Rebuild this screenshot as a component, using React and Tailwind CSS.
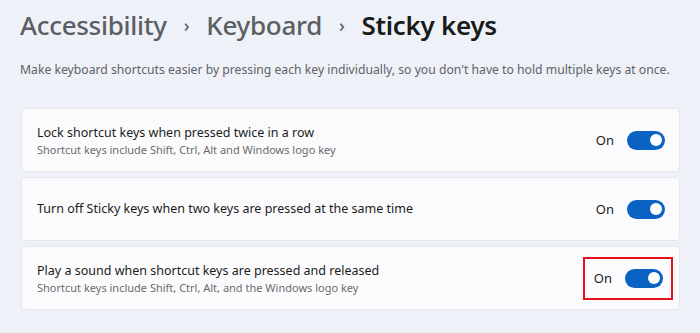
import React from "react";

function Toggle() {
  return (
    <div className="w-[38px] h-[19px] rounded-full bg-[#0a62c2] flex items-center justify-end pr-[3px]">
      <div className="w-[12px] h-[12px] rounded-full bg-white" />
    </div>
  );
}

function Row({ title, sub, highlight }) {
  return (
    <div className="h-[64px] rounded-[4px] bg-[#fbfbfd] border border-[#e6e8ec] flex items-center pl-[15px] pr-[14px]">
      <div className="flex-1 flex flex-col">
        <div className="text-[12.5px] leading-[18px] text-[#1b1b1b]">{title}</div>
        {sub && <div className="text-[11px] leading-[15px] text-[#6b6b6b]">{sub}</div>}
      </div>
      <div className={highlight ? "flex items-center gap-[13px] border-2 border-[#e8101e] pl-[9px] pr-[8px] h-[43px] mr-[-8px]" : "flex items-center gap-[13px]"}>
        <span className="text-[13px] text-[#1b1b1b]">On</span>
        <Toggle />
      </div>
    </div>
  );
}

export default function App() {
  return (
    <div className="w-[700px] h-[333px] bg-[#eef2f8] px-[20px] pt-[5px]" style={{ fontFamily: '"Noto Sans", sans-serif' }}>
      <div className="flex items-center h-[40px] text-[26px] tracking-[-0.3px] font-medium">
        <span className="text-[#5b5e63]">Accessibility</span>
        <span className="text-[#5b5e63] text-[18px] mx-[17px]">›</span>
        <span className="text-[#5b5e63]">Keyboard</span>
        <span className="text-[#5b5e63] text-[18px] mx-[17px]">›</span>
        <span className="text-[#1a1a1a] font-semibold">Sticky keys</span>
      </div>
      <div className="mt-[16px] text-[12.2px] text-[#5f6166] whitespace-nowrap">
        Make keyboard shortcuts easier by pressing each key individually, so you don't have to hold multiple keys at once.
      </div>
      <div className="mt-[29px] ml-[1px] w-[659px] flex flex-col gap-[5px]">
        <Row title="Lock shortcut keys when pressed twice in a row" sub="Shortcut keys include Shift, Ctrl, Alt and Windows logo key" />
        <Row title="Turn off Sticky keys when two keys are pressed at the same time" />
        <Row title="Play a sound when shortcut keys are pressed and released" sub="Shortcut keys include Shift, Ctrl, Alt, and the Windows logo key" highlight />
      </div>
    </div>
  );
}
